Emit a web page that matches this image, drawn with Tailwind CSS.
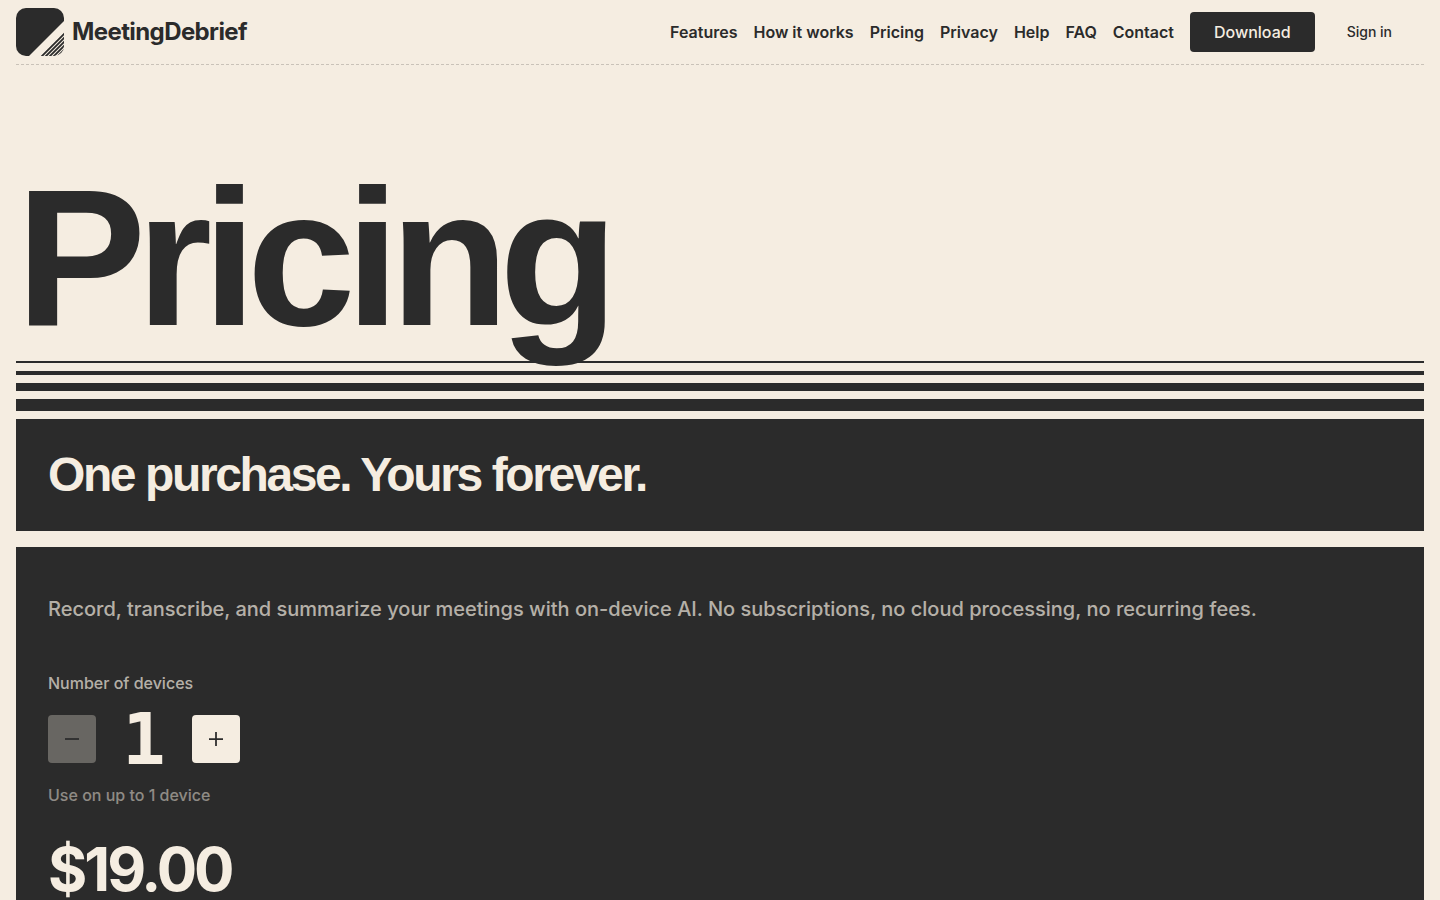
<!DOCTYPE html>
<html lang="en">
<head>
  <meta charset="UTF-8" />
  <meta name="viewport" content="width=device-width, initial-scale=1" />
  <title>Pricing - MeetingDebrief</title>

  <script src="https://cdn.jsdelivr.net/npm/@tailwindcss/browser@4"></script>
</head>

<body class="flex min-h-screen flex-col bg-[#f5ede1] px-4 font-['Inter',sans-serif] text-[#2b2b2b]">

  <!-- Header -->
  <header class="flex items-center justify-between border-b border-dashed border-[#c9c2b8] py-2">
    <a href="#" class="flex items-center gap-2">
      <svg class="size-12" viewBox="0 0 48 48" aria-hidden="true">
        <defs>
          <clipPath id="logo-shape"><rect width="48" height="48" rx="10" /></clipPath>
        </defs>
        <g clip-path="url(#logo-shape)">
          <path fill="#2b2b2b" d="M0 0H48V13L13 48H0Z" />
          <path stroke="#2b2b2b" stroke-width="1.8" d="M24 50L50 24M28 50L50 28M32 50L50 32M36 50L50 36M40 50L50 40" />
        </g>
      </svg>
      <span class="text-2xl font-bold tracking-tight">MeetingDebrief</span>
    </a>

    <nav class="flex items-center gap-4 font-semibold">
      <a href="#">Features</a>
      <a href="#">How it works</a>
      <a href="#">Pricing</a>
      <a href="#">Privacy</a>
      <a href="#">Help</a>
      <a href="#">FAQ</a>
      <a href="#">Contact</a>
      <div class="flex items-center font-medium">
        <a href="#" class="rounded bg-[#2b2b2b] px-6 py-2 text-[#f5ede1]">Download</a>
        <a href="#" class="px-8 py-2 text-sm">Sign in</a>
      </div>
    </nav>
  </header>

  <main class="flex flex-1 flex-col">
    <h1 class="pt-24 pb-2 font-['Liberation_Sans',sans-serif] text-[195px] leading-[192px] font-bold tracking-tighter">Pricing</h1>

    <!-- Stripes -->
    <div class="mb-2 flex flex-col gap-2">
      <div class="h-0.5 bg-[#2b2b2b]"></div>
      <div class="h-1 bg-[#2b2b2b]"></div>
      <div class="h-2 bg-[#2b2b2b]"></div>
      <div class="h-3 bg-[#2b2b2b]"></div>
    </div>

    <section class="bg-[#2b2b2b] p-8 text-[#f5ede1]">
      <h2 class="font-['Liberation_Sans',sans-serif] text-5xl leading-none font-bold tracking-tighter">One purchase. Yours forever.</h2>
    </section>

    <section class="mt-4 flex-1 bg-[#2b2b2b] px-8 pt-12 text-[#f5ede1]">
      <p class="text-xl leading-7 font-medium text-[#f5ede1]/70">Record, transcribe, and summarize your meetings with on-device AI. No subscriptions, no cloud processing, no recurring fees.</p>

      <!-- Device counter -->
      <div class="mt-12 flex flex-col gap-2">
        <label for="devices" class="font-medium text-[#f5ede1]/70">Number of devices</label>
        <div class="flex items-center">
          <button id="minus" type="button" aria-label="Fewer devices" disabled class="flex size-12 items-center justify-center rounded bg-[#f5ede1] text-[#2b2b2b] disabled:opacity-30">
            <svg class="size-6" viewBox="0 0 24 24" fill="none" stroke="currentColor" stroke-width="1.75"><path d="M5 12h14" /></svg>
          </button>
          <input id="devices" type="text" value="1" readonly class="h-18 w-24 text-center font-['DejaVu_Sans_Mono',monospace] text-7xl leading-none font-bold" />
          <button id="plus" type="button" aria-label="More devices" class="flex size-12 items-center justify-center rounded bg-[#f5ede1] text-[#2b2b2b] disabled:opacity-30">
            <svg class="size-6" viewBox="0 0 24 24" fill="none" stroke="currentColor" stroke-width="1.75"><path d="M5 12h14M12 5v14" /></svg>
          </button>
        </div>
        <p id="note" class="font-medium text-[#f5ede1]/50">Use on up to 1 device</p>
      </div>

      <p class="mt-8 text-6xl leading-none font-bold tracking-tighter">$19.00</p>
    </section>
  </main>

  <script>
    const devices = document.getElementById('devices');
    const minus = document.getElementById('minus');
    const note = document.getElementById('note');

    function changeDevices(step) {
      const count = Math.max(1, Number(devices.value) + step);
      devices.value = count;
      minus.disabled = count === 1;
      note.textContent = `Use on up to ${count} device${count === 1 ? '' : 's'}`;
    }

    minus.addEventListener('click', () => changeDevices(-1));
    document.getElementById('plus').addEventListener('click', () => changeDevices(1));
  </script>
</body>
</html>
